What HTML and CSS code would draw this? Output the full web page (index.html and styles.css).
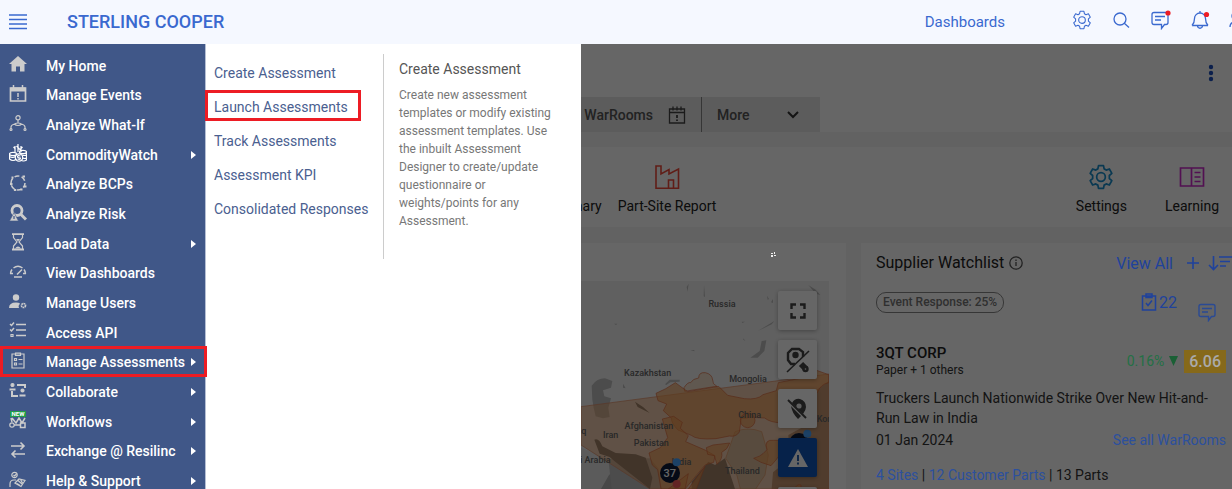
FILE: index.html
```html
<!DOCTYPE html>
<html lang="en">
<head>
<meta charset="utf-8">
<title>Sterling Cooper</title>
<link rel="stylesheet" href="styles.css">
</head>
<body>
<svg class="defs" width="0" height="0" aria-hidden="true">
  <symbol id="gear" viewBox="0 0 24 24"><path d="M9.7 1.5h4.6l.6 3 1.900 1.100 2.900-1 2.300 4-2.300 2v2.800l2.300 2-2.300 4-2.900-1-1.900 1.100-.6 3H9.700l-.6-3-1.900-1.100-2.900 1-2.300-4 2.300-2v-2.800l-2.300-2 2.300-4 2.900 1 1.900-1.100z" stroke-linejoin="round"/><circle cx="12" cy="12" r="4"/></symbol>
  <symbol id="chat" viewBox="0 0 20 20"><path d="M4 2.500h12q2 0 2 2v8q0 2-2 2h-1.500l-3 4v-4H4q-2 0-2-2v-8q0-2 2-2zM5 6.500h10M5 10h6"/></symbol>
</svg>

<header class="topbar">
  <button class="icon-button" type="button" aria-label="Menu"><svg width="18" height="16" viewBox="0 0 18 16"><path d="M0 1h18M0 5.500h18M0 10h18M0 14.500h18" stroke="#3a69cf" stroke-width="1.400"/></svg></button>
  <h1 class="company">STERLING COOPER</h1>
  <a class="dash-link" href="#">Dashboards</a>
  <nav class="tools" aria-label="Tools">
    <button class="icon-button" type="button" aria-label="Settings"><svg class="line" width="20" height="20" viewBox="0 0 24 24" stroke-width="1.600"><use href="#gear"/></svg></button>
    <button class="icon-button" type="button" aria-label="Search"><svg class="line" width="20" height="20" viewBox="0 0 20 20"><circle cx="9" cy="9" r="6"/><path d="M13.300 13.300 18 17.500"/></svg></button>
    <button class="icon-button" type="button" aria-label="Messages"><svg class="line" width="20" height="20" viewBox="0 0 20 20"><use href="#chat"/><circle cx="18" cy="3" r="2.600" fill="#ed1c24" stroke="none"/></svg></button>
    <button class="icon-button" type="button" aria-label="Alerts"><svg class="line" width="20" height="20" viewBox="0 0 20 20"><path d="M11 1v1.500M3 15.500h16M3 15.500c1.500-1.500 2.500-2.500 2.500-7a5.500 5.500 0 0 1 11 0c0 4.500 1 5.500 2.500 7M8.500 16c.5 3 4.500 3 5 0"/><circle cx="17.500" cy="4.500" r="2.600" fill="#ed1c24" stroke="none"/></svg></button>
    <button class="icon-button" type="button" aria-label="Profile"><svg class="line" width="20" height="20" viewBox="0 0 20 20"><circle cx="8" cy="6" r="4"/><path d="M2 17q0-5 6-5t6 5"/></svg></button>
  </nav>
</header>

<div class="shell">
  <nav class="sidebar" aria-label="Main">
    <ul class="menu">
      <li><a href="#"><svg class="mi" viewBox="0 0 18 18"><path d="M9 1l9 8h-2.500v7.500h-4.500v-5H7v5H2.500V9H0z" fill="#ccc" stroke="none"/></svg>My Home</a></li>
      <li><a href="#"><svg class="mi" viewBox="0 0 18 18"><path d="M1.500 3h15v13h-15z" stroke-width="1.700"/><path d="M1.500 4.500h15" stroke-width="4"/><path d="M4.500 0v4M13.500 0v4M9 8v4M9 13v1.500" stroke-width="1.500"/></svg>Manage Events</a></li>
      <li><a href="#"><svg class="mi" viewBox="0 0 18 18"><circle cx="9" cy="2.800" r="2.100"/><path d="M9 5v3M2 14v-2q0-2 3.500-3 3.500-2 7 0 3.500 1 3.500 3v2M5 9q4 3 8 0"/><circle cx="2" cy="14.500" r="1"/><circle cx="16" cy="14.500" r="1"/></svg>Analyze What-If</a></li>
      <li><a href="#"><svg class="mi bright" viewBox="0 0 18 18"><path d="M6 8V2M9 8V0M12 8V2M4.500 3l2 2M7.500 2l3 3M13.500 3l-3 3"/><ellipse cx="4" cy="10" rx="3.500" ry="1.700"/><ellipse cx="14" cy="8" rx="3.500" ry="1.700"/><path d="M.5 10v5q3.500 3 7 0M17.500 8v8q-3 2-6 0M.5 12.500q3 2 6 0M13 11q3 1 4.500 0M14 14q2 1 3.500 0"/><circle cx="10" cy="13.500" r="3.700"/><path d="M11.500 12q-3-1-3 .5t3 1.500q0 2-3 1"/></svg>CommodityWatch</a><span class="arrow"></span></li>
      <li><a href="#"><svg class="mi" viewBox="0 0 18 18"><circle cx="9" cy="9" r="7" stroke-width="1.500" stroke-dasharray="5 2.300"/><path d="M2.500 3.500h2M13.500 2.500h2.500M15 12.500h2.500M6 15v2M1 10h2.500M11.500 15.500h2" stroke-width="2.200"/></svg>Analyze BCPs</a></li>
      <li><a href="#"><svg class="mi" viewBox="0 0 18 18"><circle cx="8" cy="6.500" r="5" stroke-width="2.800"/><path d="M11.500 10l5.500 5.500" stroke-width="3"/><path d="M5 8.500l4.500 8.500H.5z" fill="#ccc" stroke="#405788" stroke-width=".6"/><path d="M5 12v3" stroke="#405788"/></svg>Analyze Risk</a></li>
      <li><a href="#"><svg class="mi" viewBox="0 0 18 18"><path d="M3 1.200h12M3 16.500h12" stroke-width="1.800"/><path d="M4.500 2v2.500L8 9l-3.500 4V16M13.500 2v2.500L10 9l3.500 4V16"/><path d="M7 6h4L9 8.500zM6 15.500q3-4 6 0z" fill="#ccc" stroke="none"/></svg>Load Data</a><span class="arrow"></span></li>
      <li><a href="#"><svg class="mi" viewBox="0 0 18 18"><path d="M1.500 10.500a7.500 7.500 0 0 1 1.500-4M4.500 5q4.500-3.500 9 0M15 6.500a7.500 7.500 0 0 1 1.500 4M1 10.500h3M14 10.500h3M5 14h8M8 11.500l5-5" stroke-width="1.500"/></svg>View Dashboards</a></li>
      <li><a href="#"><svg class="mi" viewBox="0 0 18 18"><circle cx="7" cy="4.500" r="3.200" fill="#ccc" stroke="none"/><path d="M0 15q0-5.500 7-5.500 3 0 4 1-2 2-1 4.500z" fill="#ccc" stroke="none"/><circle cx="14.500" cy="12.500" r="2" stroke-width="1.700" stroke-dasharray="1.600 .5"/></svg>Manage Users</a></li>
      <li><a href="#"><svg class="mi" viewBox="0 0 18 18"><path d="M7 2.500h10M7 8h10M7 13.500h10M1 2l1.500 1.500L5 .5M1 7.500L2.500 9 5 6" stroke-width="1.500"/><path d="M2 12.500h2v2H2z"/></svg>Access API</a></li>
      <li class="current"><a href="#" aria-current="page"><svg class="mi" viewBox="0 0 18 18"><path d="M3 2h12v14H3z"/><path d="M6.500 1h5v2.500h-5zM5.500 6.500h2v2h-2zM5.500 11h2v2h-2zM9.500 7.500h4M9.500 12h4"/></svg>Manage Assessments</a><span class="arrow"></span></li>
      <li><a href="#"><svg class="mi" viewBox="0 0 18 18"><circle cx="3.500" cy="3" r="1.500" fill="#ccc"/><circle cx="13.500" cy="8.500" r="1.500" fill="#ccc"/><path d="M.5 7.500h6M10.500 13.500h6M8 3h8v3M3 9v5h6" stroke-width="2"/></svg>Collaborate</a><span class="arrow"></span></li>
      <li><a href="#"><svg class="mi" viewBox="0 0 18 18"><circle cx="3" cy="14" r="2.200"/><path d="M11.500 12h4.500v4.500h-4.500zM5 14h6M3 11l-1-4M3 7l4 5 3-5 3 5 3-5M10 7l-3 5" stroke-width="1.500"/><path d="M1 0h16v6H1z" fill="#1f9d49" stroke="none"/><text x="9" y="5" text-anchor="middle" class="new">NEW</text></svg>Workflows</a><span class="arrow"></span></li>
      <li><a href="#"><svg class="mi" viewBox="0 0 18 18"><path d="M2 5h13M11.500 1.500L15 5l-3.500 3.500M16 13H3M6.500 9.500L3 13l3.500 3.500" stroke-width="1.600"/></svg>Exchange @ Resilinc</a><span class="arrow"></span></li>
      <li><a href="#"><svg class="mi" viewBox="0 0 18 18"><circle cx="5.500" cy="4" r="2.700"/><path d="M4.500 4l1 1 2-2M1 16v-3q0-4 4-4h2M6 12l4-4 6 1.500-4 6zM9 9.500l4 3.500M11.500 8.500l2 3.500M8 12.500l3 2"/></svg>Help &amp; Support</a><span class="arrow"></span></li>
    </ul>
  </nav>

  <section class="flyout" aria-label="Manage Assessments">
    <ul class="sublinks">
      <li><a href="#">Create Assessment</a></li>
      <li class="marked"><a href="#">Launch Assessments</a></li>
      <li><a href="#">Track Assessments</a></li>
      <li><a href="#">Assessment KPI</a></li>
      <li><a href="#">Consolidated Responses</a></li>
    </ul>
    <div class="about">
      <h2>Create Assessment</h2>
      <p>Create new assessment<br>templates or modify existing<br>assessment templates. Use<br>the inbuilt Assessment<br>Designer to create/update<br>questionnaire or<br>weights/points for any<br>Assessment.</p>
    </div>
  </section>

  <main class="page">
    <div class="banner">
      <button class="icon-button" type="button" aria-label="More options"><svg width="6" height="18" viewBox="0 0 6 18" fill="#1c4fbd"><circle cx="3" cy="3" r="2.200"/><circle cx="3" cy="9" r="2.200"/><circle cx="3" cy="15" r="2.200"/></svg></button>
    </div>
    <div class="tabs">
      <button class="tab tab-wide" type="button">WarRooms<svg width="18" height="18" viewBox="0 0 18 18" fill="none" stroke="#444" stroke-width="1.300"><path d="M1.500 3h15v14h-15zM1.500 6.500h15M5 .5v4M9 .5v4M13 .5v4"/><path d="M9 9v3M9 13.500V15" stroke-width="1.800"/></svg></button>
      <button class="tab tab-more" type="button">More<svg width="12" height="8" viewBox="0 0 12 8" fill="none" stroke="#333" stroke-width="2"><path d="M1 1l5 5 5-5"/></svg></button>
    </div>
    <div class="shortcuts">
      <a href="#"><svg width="26" height="26"></svg>Summary</a>
      <a href="#"><svg width="26" height="26" viewBox="0 0 26 26" fill="none" stroke="#f04a3a" stroke-width="1.600"><path d="M2 24.200V2h5v8l8-4.500V10l9.500-5v19.200zM14.500 24v-8h5v8"/></svg>Part-Site Report</a>
      <a class="push" href="#"><svg width="26" height="26" viewBox="0 0 24 24" fill="none" stroke="#1a8fcc" stroke-width="1.600"><use href="#gear"/></svg>Settings</a>
      <a href="#"><svg width="26" height="26" viewBox="0 0 26 26" fill="none" stroke="#cc2acc" stroke-width="1.700"><path d="M1.500 4h23v18h-23zM12.500 4v18M15.500 8.500h6M15.500 13h6M15.500 17.500h6"/></svg>Learning</a>
    </div>
    <div class="cards">
      <section class="card map-card" aria-label="Risk map">
        <div class="map">
          <svg class="world" width="248" height="208" viewBox="18 168 744 624">
            <g fill="#bdbdbd">
              <path d="M18 712l60-5 110 25 30 60H18z" fill="#b4b4b4"/>
              <path d="M18 668l90 38 34 14-40 30-24 42H18z" fill="#e4e4e4"/>
              <path d="M225 700l25 30 10 62H110l-10-90z"/>
              <path d="M50 482q16-22 40-22l22 8-4 20-24 8 4 18 20 6-8 28 4 28-20 4-22-6-6-26-4-24z"/>
              <path d="M526 398l28-20 6-30 14-2-6 32-20 20zM270 478l14-14h30v6l-28 2-12 8zM338 200l-3-14 6-10-2 14zM387 180l3 36-4-2zM700 180l22 14 14 16-14-4zM548 318l50-30-8 10zM117 296h10l-4 4zM144 476l8 14-8-2zM500 290h10l-8 4zM576 212l6 10-4 2zM588 232l6-10v12zM505 340l6 8-6-4zM346 375h12v4z"/>
              <path d="M640 630l40-22 20-60 20-50 42-30v324H590l4-50 50-40z" fill="#a89484"/>
            </g>
            <path d="M18 545L762 447V792H225L18 660z" fill="#ee9a58" fill-opacity=".44" stroke="#e08a60" stroke-width="2"/>
            <path d="M58 644q14-6 24 20l40 20 60 4 30 10 20 60-7 34L118 708l-14-12-30-10zM180 530l24 16 20 18-36-18zM350 770l50-60 20 10 30-20 30 92H350z" fill="#a28268"/>
            <path d="M480 620q40-16 80 0l20 70-10 60-28 42h-46l-10-40-34-52z" fill="#dcbc9c" stroke="#df9460" stroke-width="2"/>
            <g fill="#f09a4c" fill-opacity=".6" stroke="#dc6a3c" stroke-width="2">
              <path d="M327 488q12-18 20-15 6-12 24-14 0-18 20-16 20 4 22 22-2 12 14 20h-10l-88 14z" fill-opacity=".25"/>
              <path d="M338 500l88-15h6l26 26 50 10q40 4 56-12l40-12 6-24 60-12 52-26 39 14v24q-24 4-34 30l-36 20-40 26 12 34q-12 20-46 10-30 0-48-14l-40-2q-20 4-30 2l-6 42q-10 16-30 12l-40 8q-60 4-74-10l-40-16q-20-20-20-36l-24-22 10-20-26-10-6-22q30-12 58-32z"/>
              <path d="M262 582l34-8 26 18-6 18 24 22-8 18 60 26 28 16-4 20-26 8-60 72h-72l-10-58-16-14-10-36 34-16 22-30z"/>
              <path d="M394 668l20-8 50-6q-6 20-24 28 4 20-14 36l-8-26-20-4zM536 700q20-6 28-14l12-12q-10-32 20-28h20l8 30-22 30-14 16-30-10z"/>
              <circle cx="518" cy="586" r="22"/>
              <path d="M340 792l50-68-26 68zM660 792q4-16 18-12v12zM280 792l60-46-10 46z"/>
            </g>
            <g class="place" text-anchor="middle">
              <text x="441" y="246">Russia</text><text x="218" y="454">Kazakhstan</text><text x="519" y="472">Mongolia</text><text x="524" y="578">China</text><text x="222" y="611">Afghanistan</text><text x="107" y="638">Iran</text><text x="229" y="664">Pakistan</text><text x="502" y="747">Thailand</text>
              <text x="34" y="626" text-anchor="end">Iraq</text><text x="107" y="715" text-anchor="end">Saudi Arabia</text><text x="349" y="720" text-anchor="end">India</text><text x="725" y="590" text-anchor="start">Korea</text>
            </g>
            <circle cx="672" cy="654" r="30" fill="#0d1a38"/><circle cx="697" cy="626" r="12" fill="#48a4ff"/>
            <circle cx="285" cy="744" r="30" fill="#0d1a38"/><circle cx="305" cy="712" r="12" fill="#48a4ff"/><circle cx="305" cy="777" r="12" fill="#f45a5a"/>
            <text x="284" y="755" text-anchor="middle" class="count">37</text>
          </svg>
          <div class="map-tools">
            <button type="button" aria-label="Full screen"><svg width="16" height="16" viewBox="0 0 16 16" fill="none" stroke="#444" stroke-width="2.400"><path d="M1.500 6V1.500H6M10 1.500h4.500V6M14.500 10v4.500H10M6 14.500H1.500V10"/></svg></button>
            <button type="button" aria-label="Hide suppliers"><svg width="24" height="26" viewBox="0 0 24 26" fill="none" stroke="#444" stroke-width="2.400"><path d="M9 17H5l-3-4V6l4-4h7l4 3v5"/><path d="M1 25L23 4" stroke-width="1.600"/><circle cx="9.500" cy="8" r="2" fill="#444"/><path d="M15 17l5 5" stroke-width="6"/><circle cx="19.500" cy="22" r="2" fill="#eee"/></svg></button>
            <button type="button" aria-label="Hide sites"><svg width="22" height="22" viewBox="0 0 22 22"><path d="M5 5q3-5 8-4 6 2 6 8 0 3-3 7zM4 8l10 10-3 3Q5 15 4 8z" fill="#444"/><circle cx="12" cy="8" r="2.600" fill="#eee"/><path d="M1 2l18 18" stroke="#444" stroke-width="2"/></svg></button>
            <button class="active" type="button" aria-label="Alerts"><svg width="20" height="18" viewBox="0 0 20 18"><path d="M10 0l10 18H0z" fill="#fff"/><path d="M10 6v6M10 13.500v2" stroke="#0f4fa8" stroke-width="1.800"/></svg></button>
            <button type="button" aria-label="Layers"></button>
          </div>
        </div>
        <svg class="spark" width="5" height="5" viewBox="0 0 5 5"><path d="M0 1h2v1H0zM3 0h1v2H3zM0 3h2v2H0zM3 3h2v1H3z" fill="#eee"/></svg>
      </section>

      <section class="card watch">
        <div class="row">
          <h2>Supplier Watchlist</h2>
          <svg class="info" width="14" height="14" viewBox="0 0 14 14" fill="none" stroke="#555" stroke-width="1.300"><circle cx="7" cy="7" r="6.200"/><path d="M7 6v4M7 3.500V5"/></svg>
          <a class="view-all lit push" href="#">View All</a>
          <button class="icon-button plus lit" type="button" aria-label="Add"><svg width="12" height="12" viewBox="0 0 12 12" stroke="#1f429c" stroke-width="1.600"><path d="M6 0v12M0 6h12"/></svg></button>
          <button class="icon-button sort lit" type="button" aria-label="Sort"><svg width="24" height="16" viewBox="0 0 24 16" fill="none" stroke="#1f429c" stroke-width="1.600"><path d="M5.500 1v13M1 10l4.500 4.500L10 10M11 2h13M12 6.500h10M12 11h6"/></svg></button>
        </div>
        <div class="row response">
          <span class="chip">Event Response: 25%</span>
          <a class="tasks lit push" href="#"><svg width="16" height="18" viewBox="0 0 16 18" fill="none" stroke="#1f429c" stroke-width="1.500"><path d="M1.500 3h13v14h-13zM5 1h6v3.500H5zM5 10l2 2.500 4-5"/></svg>22</a>
          <a class="note lit" href="#" aria-label="Messages"><svg width="20" height="20" viewBox="0 0 20 20" fill="none" stroke="#2a4a94" stroke-width="1.400"><use href="#chat"/></svg></a>
        </div>
        <div class="row supplier">
          <div><h3>3QT CORP</h3><p class="small">Paper + 1 others</p></div>
          <span class="change lit push">0.16%<svg width="9" height="10" viewBox="0 0 9 10"><path d="M0 0h9L4.500 10z" fill="#1a6035"/></svg></span>
          <span class="score lit">6.06</span>
        </div>
        <p class="headline">Truckers Launch Nationwide Strike Over New Hit-and-Run Law in India</p>
        <div class="row date"><time datetime="2024-01-01">01 Jan 2024</time><a class="lit push" href="#">See all WarRooms</a></div>
        <p class="totals"><a class="lit" href="#">4 Sites</a> | <a class="lit" href="#">12 Customer Parts</a> | 13 Parts</p>
      </section>
      <div class="shade"></div>
    </div>
    <div class="shade upper"></div>
  </main>
</div>
</body>
</html>
```
FILE: styles.css
```css
* { box-sizing: border-box; }
body { margin: 0; height: 100vh; overflow: hidden; display: flex; flex-direction: column; font-family: Roboto, "Liberation Sans", sans-serif; font-size: 14px; color: #222; background: #fff; }
h1, h2, h3, p, ul { margin: 0; padding: 0; }
ul { list-style: none; }
a { text-decoration: none; color: inherit; }
button { font: inherit; color: inherit; border: 0; background: none; padding: 0; }
svg { display: block; flex: none; }
.defs { position: absolute; }
.icon-button { display: flex; flex: none; }
.push { margin-left: auto; }
.line { fill: none; stroke: #3a69cf; stroke-width: 1.3; overflow: visible; }

.topbar { flex: none; display: flex; align-items: center; height: 44px; padding-left: 9px; background: #f5f8ff; overflow: hidden; }
.company { margin-left: 40px; padding-bottom: 1px; font-size: 18px; line-height: 24px; font-weight: 500; color: #3a69cf; }
.dash-link { margin-left: auto; margin-right: 67px; font-size: 15px; color: #3a69cf; }
.tools { display: flex; gap: 19px; margin-right: -16px; padding-bottom: 4px; }

.shell { position: relative; flex: 1; min-height: 0; display: flex; }
.sidebar { position: relative; z-index: 3; flex: none; width: 205px; background: #405788; color: #fff; }
.menu { height: 100%; margin-top: 7px; display: grid; grid-auto-rows: minmax(29px, 1fr); }
.menu li { position: relative; display: flex; align-items: center; justify-content: space-between; padding: 0 9px; font-weight: 500; }
.menu a { display: flex; align-items: center; gap: 19px; white-space: nowrap; }
.mi { width: 18px; height: 18px; margin-bottom: 3px; fill: none; stroke: currentColor; color: #ccc; stroke-width: 1.2; }
.mi.bright { color: #fff; }
.new { font-size: 6px; font-weight: 700; fill: #fff; stroke: none; }
.arrow { border: 4px solid transparent; border-left: 5px solid #fff; border-right: 0; }
.current::after { content: ""; position: absolute; inset: -2px -2px 0 0; border: 3px solid #ed1c24; }

.flyout { position: absolute; z-index: 2; left: 205px; top: 0; bottom: 0; width: 376px; display: flex; align-items: flex-start; padding-top: 10px; background: #fff; border-left: 1px solid #b5bfd4; }
.sublinks { width: 178px; height: 205px; border-right: 1px solid #ccc; padding-top: 2px; color: #4a6090; white-space: nowrap; }
.sublinks li { position: relative; line-height: 34px; padding-left: 8px; }
.marked::after { content: ""; position: absolute; left: -1px; right: 22px; top: 0; bottom: 3px; border: 3px solid #ed1c24; }
.about { flex: 1; padding: 5px 15px; color: #777; }
.about h2 { font-size: 14px; line-height: 20px; font-weight: 400; color: #555; }
.about p { margin-top: 7px; font-size: 12px; line-height: 18px; }

.page { position: relative; flex: 1; min-width: 0; overflow: hidden; display: flex; flex-direction: column; background: #f5f5f5; }
.shade { position: absolute; inset: 0; background: rgba(0, 0, 0, .6); }
.shade.upper { bottom: auto; height: 199px; }
.lit { position: relative; z-index: 1; }
.banner { height: 53px; flex: none; display: flex; justify-content: flex-end; padding: 20px 18px 0; background: #fff; }
.tabs { flex: none; display: flex; background: #fff; color: #555; font-weight: 500; }
.tab { display: flex; align-items: center; height: 35px; background: #e5e5e5; }
.tab-wide { width: 497px; justify-content: flex-end; gap: 15px; padding-right: 15px; border-right: 1px solid #888; }
.tab-more { width: 118px; justify-content: space-between; padding: 0 21px 0 15px; }
.shortcuts { flex: none; display: flex; gap: 16px; margin: 15px 0; height: 80px; padding: 17px 13px 0 337px; background: #fff; color: #222; }
.shortcuts a { display: flex; flex-direction: column; align-items: center; gap: 6px; line-height: 20px; }
.shortcuts .push { margin-left: auto; margin-right: 22px; }
.cards { position: relative; flex: 1; min-height: 0; display: grid; grid-template-columns: minmax(0, 1fr) 371px; gap: 15px; margin-top: 1px; background: #f5f5f5; }
.card { background: #fff; }
.map-card { padding: 38px 17px 0 0; }
.map { position: relative; height: 100%; display: flex; justify-content: flex-end; overflow: hidden; background: #f0f0f0; }
.place { font-size: 27px; font-weight: 500; fill: #666; }
.count { font-size: 33px; font-weight: 500; fill: #fff; }
.map-tools { position: absolute; right: 12px; top: 10px; display: grid; gap: 10px; }
.map-tools button { display: flex; align-items: center; justify-content: center; width: 39px; height: 39px; border-radius: 2px; background: #fff; box-shadow: 0 1px 4px rgba(0, 0, 0, .3); }
.map-tools .active { background: #0f55b8; }
.spark { position: absolute; z-index: 1; right: 456px; top: 9px; }

.row { display: flex; align-items: center; }
.watch { padding: 9px 6px 0 15px; }
.watch h2 { font-size: 16px; line-height: 22px; font-weight: 400; }
.watch a { color: #2c509e; }
.info { margin-left: 5px; }
.watch .view-all { font-size: 16px; color: #1f429c; }
.plus { margin-left: 14px; }
.sort { margin: 0 -6px 0 9px; }
.response { margin-top: 16px; height: 24px; }
.chip { padding: 0 6px; border: 1px solid #888; border-radius: 10px; font-size: 12px; line-height: 19px; font-weight: 500; color: #777; }
.watch .tasks { display: flex; align-items: center; gap: 2px; font-size: 16px; color: #1f429c; }
.note { margin: 20px 9px 0 20px; }
.supplier { margin-top: 30px; }
.supplier h3 { font-size: 15px; line-height: 18px; font-weight: 500; }
.small { font-size: 12px; line-height: 16px; color: #333; }
.change { display: flex; align-items: center; gap: 5px; color: #237045; }
.score { margin-left: 6px; padding: 0 5px; background: #86691a; color: #aaa; font-size: 16px; line-height: 23px; font-weight: 500; }
.headline { margin-top: 10px; line-height: 20px; color: #333; }
.date { margin-top: 2px; line-height: 20px; color: #333; }
.totals { margin-top: 15px; line-height: 20px; color: #333; }
```
